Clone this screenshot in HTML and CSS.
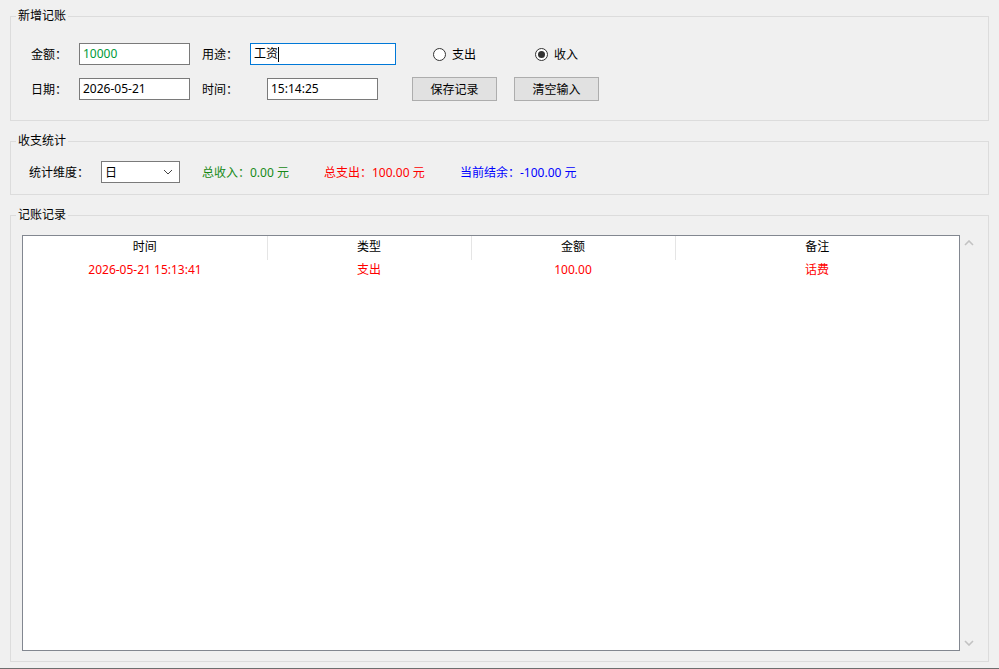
FILE: index.html
```html
<!DOCTYPE html>
<html lang="zh-CN">
<head>
    <meta charset="UTF-8">
    <title>记账本</title>
    <link rel="stylesheet" href="styles.css">
</head>
<body>
    <fieldset class="group group-add">
        <legend>新增记账</legend>
        <div class="group-body add-body">
            <div class="row">
                <span class="lbl">金额：</span>
                <span class="txt txt-short money">10000</span>
                <span class="lbl lbl-gap">用途：</span>
                <span class="txt txt-long focus">工资<i class="caret"></i></span>
                <span class="radio radio-first"><i class="dot"></i>支出</span>
                <span class="radio"><i class="dot checked"></i>收入</span>
            </div>
            <div class="row">
                <span class="lbl">日期：</span>
                <span class="txt txt-short">2026-05-21</span>
                <span class="lbl lbl-gap lbl-wide">时间：</span>
                <span class="txt txt-short">15:14:25</span>
                <button class="btn btn-save">保存记录</button>
                <button class="btn btn-clear">清空输入</button>
            </div>
        </div>
    </fieldset>

    <fieldset class="group group-stat">
        <legend>收支统计</legend>
        <div class="group-body stat-body">
            <span class="lbl lbl-dim">统计维度：</span>
            <div class="combo">
                <span>日</span>
                <svg width="10" height="6" viewBox="0 0 10 6"><path d="M1 1 L5 5 L9 1" fill="none" stroke="#444" stroke-width="1"/></svg>
            </div>
            <span class="stat income">总收入：0.00 元</span>
            <span class="stat expense">总支出：100.00 元</span>
            <span class="stat balance">当前结余：-100.00 元</span>
        </div>
    </fieldset>

    <fieldset class="group group-list">
        <legend>记账记录</legend>
        <div class="group-body list-body">
            <div class="grid-box">
                <table class="grid">
                    <colgroup>
                        <col style="width:244px">
                        <col style="width:204px">
                        <col style="width:204px">
                        <col style="width:284px">
                    </colgroup>
                    <thead>
                        <tr>
                            <th>时间</th>
                            <th>类型</th>
                            <th>金额</th>
                            <th>备注</th>
                        </tr>
                    </thead>
                    <tbody>
                        <tr class="out">
                            <td>2026-05-21 15:13:41</td>
                            <td>支出</td>
                            <td>100.00</td>
                            <td>话费</td>
                        </tr>
                    </tbody>
                </table>
            </div>
            <div class="vscroll">
                <svg width="10" height="6" viewBox="0 0 10 6"><path d="M1 5 L5 1 L9 5" fill="none" stroke="#c2c2c2" stroke-width="1.6"/></svg>
                <svg width="10" height="6" viewBox="0 0 10 6"><path d="M1 1 L5 5 L9 1" fill="none" stroke="#c2c2c2" stroke-width="1.6"/></svg>
            </div>
        </div>
    </fieldset>
</body>
</html>
```

FILE: styles.css
```css
html {
    background: #f0f0f0;
}
body {
    margin: 0;
    padding: 8px 10px 0;
    height: 669px;
    box-sizing: border-box;
    border-bottom: 1px solid #6e6e6e;
    overflow: hidden;
    font-family: "Noto Sans", "Noto Sans CJK SC", sans-serif;
    font-size: 12px;
    color: #000;
    background: #f0f0f0;
}
.group {
    margin: 0;
    padding: 0;
    min-width: 0;
    border: 1px solid #dcdcdc;
}
.group legend {
    margin-left: 5px;
    padding: 0 2px;
    line-height: 15px;
    height: 16px;
}
.group-stat, .group-list {
    margin-top: 12px;
}

/* new record box */
.add-body {
    padding: 19px 20px 19px;
    display: flex;
    flex-direction: column;
    gap: 12px;
}
.row {
    display: flex;
    align-items: center;
    height: 22px;
}
.row + .row {
    height: 24px;
}
.lbl {
    width: 48px;
    flex: none;
    white-space: nowrap;
}
.lbl-gap {
    margin-left: 12px;
}
.lbl-wide {
    width: 65px;
}
.txt {
    box-sizing: border-box;
    height: 22px;
    line-height: 20px;
    padding: 0 3px;
    background: #fff;
    border: 1px solid #7a7a7a;
    flex: none;
    white-space: nowrap;
    display: flex;
    align-items: center;
}
.txt-short {
    width: 111px;
}
.txt-long {
    width: 146px;
}
.focus {
    border-color: #0078d7;
}
.money {
    color: #009a3a;
}
.caret {
    display: inline-block;
    width: 1px;
    height: 15px;
    background: #000;
}
.radio {
    display: flex;
    align-items: center;
    gap: 6px;
    width: 102px;
    flex: none;
}
.radio-first {
    margin-left: 37px;
}
.dot {
    width: 13px;
    height: 13px;
    box-sizing: border-box;
    border: 1px solid #333;
    border-radius: 50%;
    background: #fff;
    display: flex;
    align-items: center;
    justify-content: center;
}
.dot.checked::after {
    content: "";
    width: 7px;
    height: 7px;
    border-radius: 50%;
    background: #333;
}
.btn {
    width: 85px;
    height: 24px;
    flex: none;
    padding: 0;
    font: inherit;
    color: #000;
    background: #e1e1e1;
    border: 1px solid #adadad;
}
.btn-save {
    margin-left: 34px;
}
.btn-clear {
    margin-left: 17px;
}

/* statistics box */
.stat-body {
    padding: 12px 18px 11px;
    display: flex;
    align-items: center;
    height: 22px;
}
.lbl-dim {
    width: 72px;
}
.combo {
    box-sizing: border-box;
    width: 79px;
    height: 22px;
    padding: 0 6px 0 3px;
    background: #fff;
    border: 1px solid #7a7a7a;
    display: flex;
    align-items: center;
    justify-content: space-between;
    flex: none;
}
.stat {
    flex: none;
    white-space: nowrap;
}
.income {
    margin-left: 22px;
    width: 122px;
    color: #178a17;
}
.expense {
    width: 136px;
    color: #ff0000;
}
.balance {
    color: #0000ff;
}

/* record list */
.list-body {
    padding: 12px 11px 10px;
    display: flex;
}
.grid-box {
    box-sizing: border-box;
    width: 938px;
    height: 416px;
    background: #fff;
    border: 1px solid #828790;
    flex: none;
}
.grid {
    border-collapse: collapse;
    table-layout: fixed;
    width: 936px;
}
.grid th {
    height: 24px;
    padding: 0;
    line-height: 22px;
    vertical-align: top;
    font-weight: normal;
    text-align: center;
    border-right: 1px solid #e5e5e5;
}
.grid th:last-child {
    border-right: none;
}
.grid td {
    height: 20px;
    padding: 0;
    line-height: 19px;
    vertical-align: top;
    text-align: center;
}
.grid .out td {
    color: #ff0000;
}
.vscroll {
    width: 17px;
    flex: none;
    display: flex;
    flex-direction: column;
    align-items: center;
    justify-content: space-between;
    padding: 5px 0 5px;
    box-sizing: border-box;
    height: 416px;
}
```
